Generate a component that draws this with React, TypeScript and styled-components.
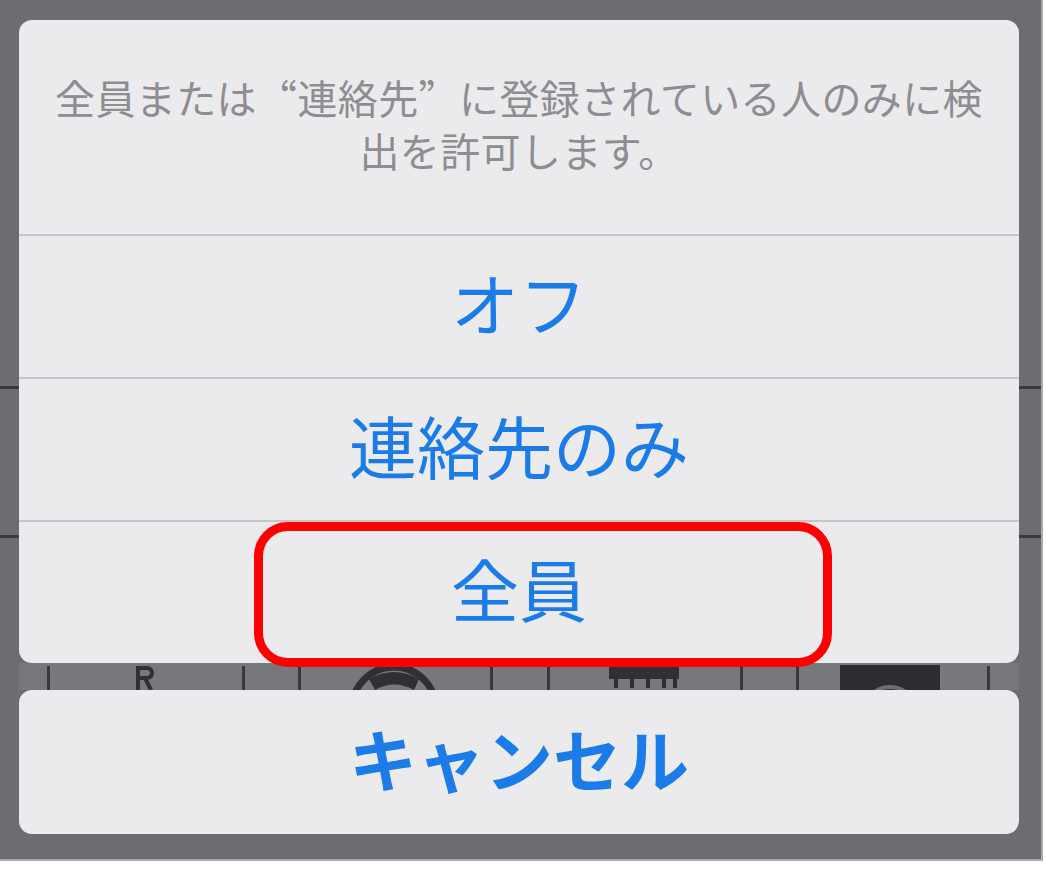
import styled, { createGlobalStyle } from "styled-components";

const GlobalStyle = createGlobalStyle`
  html,
  body {
    margin: 0;
    padding: 0;
    background: #ffffff;
  }

  body {
    font-family: "Noto Sans CJK JP", "Noto Sans", sans-serif;
  }
`;

const Screen = styled.div`
  box-sizing: border-box;
  width: 1043px;
  height: 861px;
  padding: 20px 22px 0 19px;
  background-color: #6c6d71;
  background-image: linear-gradient(#3a3b3f, #3a3b3f),
    linear-gradient(#3a3b3f, #3a3b3f);
  background-size: 100% 3px;
  background-position: 0 386px, 0 535px;
  background-repeat: no-repeat;
  border-right: 2px solid #a9a9ad;
  border-bottom: 2px solid #a9a9ad;
`;

const Sheet = styled.div`
  display: flex;
  flex-direction: column;
  width: 1000px;
`;

const Card = styled.div`
  display: flex;
  flex-direction: column;
  background: #ebebed;
  border-radius: 13px;
`;

// full-width quotes, as the iOS sheet sets them
const Header = styled.p`
  box-sizing: border-box;
  height: 214px;
  margin: 0;
  padding: 51px 30px 0;
  color: #8e8e92;
  font-size: 40px;
  font-feature-settings: "fwid" 1;
  letter-spacing: 0.4px;
  line-height: 53px;
  text-align: center;
`;

const Option = styled.div<{ $bold?: boolean }>`
  position: relative;
  box-sizing: border-box;
  height: ${({ $bold }) => ($bold ? "144px" : "143px")};
  padding-bottom: 9px;
  display: flex;
  align-items: center;
  justify-content: center;
  border-top: ${({ $bold }) => ($bold ? "none" : "2px solid #c6c6ca")};
  color: #1b7be9;
  font-size: 68px;
  font-weight: ${({ $bold }) => ($bold ? 700 : 400)};
  line-height: 1;
`;

const Highlight = styled.div`
  position: absolute;
  top: 0;
  left: 235px;
  width: 578px;
  height: 145px;
  box-sizing: border-box;
  border: 9px solid #ff0000;
  border-radius: 34px;
  pointer-events: none;
`;

const ToolbarPeek = styled.div`
  height: 27px;
  background: #77787c;
  line-height: 0;
`;

const separators = [28, 223, 279, 471, 528, 721, 777, 968];

function ToolbarIcons() {
  return (
    <svg width="1000" height="27" viewBox="0 0 1000 27">
      {separators.map((x) => (
        <rect key={x} x={x} y={3} width={3} height={24} fill="#37383c" />
      ))}
      <path
        d="M119 27V5h9a5 5 0 0 1 0 10h-9M126 15l6 12"
        fill="none"
        stroke="#2f3034"
        strokeWidth={4}
      />
      <circle cx={375} cy={46} r={42} fill="none" stroke="#2f3034" strokeWidth={7} />
      <path d="M350 16 Q375 2 400 16 L395 27 Q375 16 356 27 Z" fill="#2f3034" />
      <path
        d="M592 6h66v8h-66z M597 14v11 M613 14v11 M629 14v11 M645 14v11 M656 14v11"
        fill="#2f3034"
        stroke="#2f3034"
        strokeWidth={4}
      />
      <rect x={821} y={2} width={100} height={25} fill="#2c2d31" />
      <circle cx={871} cy={50} r={26} fill="none" stroke="#6d6e72" strokeWidth={4} />
    </svg>
  );
}

export default function App() {
  return (
    <>
      <GlobalStyle />
      <Screen>
        <Sheet>
          <Card>
            <Header>
              全員または“連絡先”に登録されている人のみに検出を許可します。
            </Header>
            <Option>オフ</Option>
            <Option>連絡先のみ</Option>
            <Option>
              全員
              <Highlight />
            </Option>
          </Card>
          <ToolbarPeek>
            <ToolbarIcons />
          </ToolbarPeek>
          <Card>
            <Option $bold>キャンセル</Option>
          </Card>
        </Sheet>
      </Screen>
    </>
  );
}
